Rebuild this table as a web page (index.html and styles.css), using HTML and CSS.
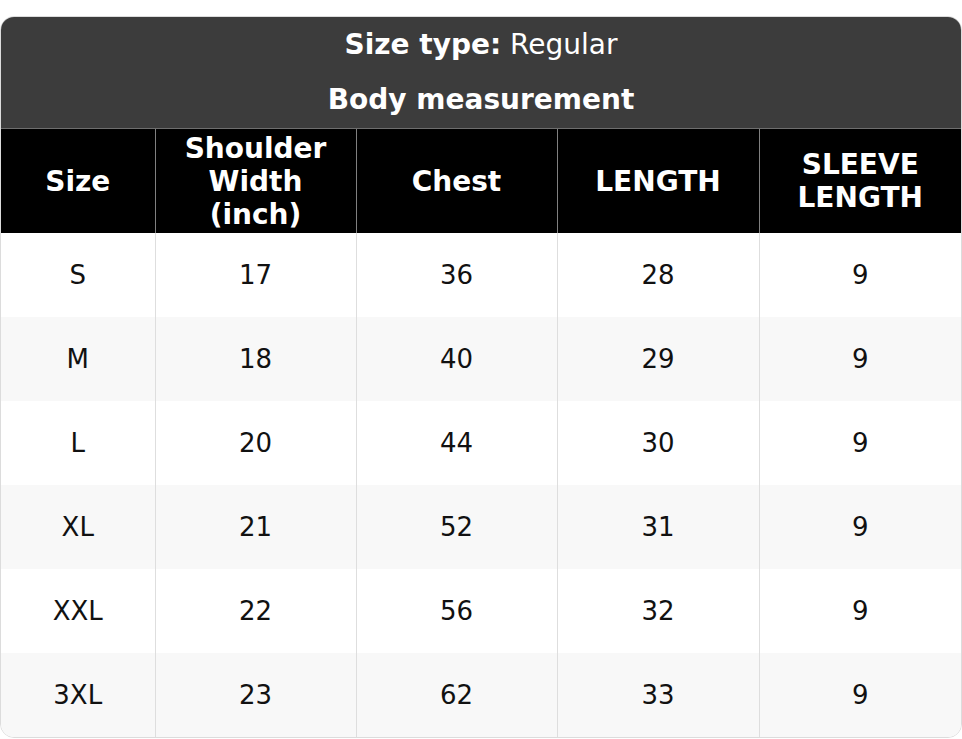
FILE: index.html
```html
<!DOCTYPE html>
<html>
<head>
<meta charset="utf-8">
<link rel="stylesheet" href="styles.css">
</head>
<body>
<div class="chart">
  <table class="size-table">
    <colgroup>
      <col class="c1"><col class="c2"><col class="c3"><col class="c4"><col class="c5">
    </colgroup>
    <thead>
      <tr class="title-row"><th colspan="5"><b>Size type:</b> Regular</th></tr>
      <tr class="title-row"><th colspan="5"><b>Body measurement</b></th></tr>
      <tr class="head-row">
        <th>Size</th>
        <th>Shoulder<br>Width<br>(inch)</th>
        <th>Chest</th>
        <th>LENGTH</th>
        <th>SLEEVE<br>LENGTH</th>
      </tr>
    </thead>
    <tbody>
      <tr><td>S</td><td>17</td><td>36</td><td>28</td><td>9</td></tr>
      <tr><td>M</td><td>18</td><td>40</td><td>29</td><td>9</td></tr>
      <tr><td>L</td><td>20</td><td>44</td><td>30</td><td>9</td></tr>
      <tr><td>XL</td><td>21</td><td>52</td><td>31</td><td>9</td></tr>
      <tr><td>XXL</td><td>22</td><td>56</td><td>32</td><td>9</td></tr>
      <tr><td>3XL</td><td>23</td><td>62</td><td>33</td><td>9</td></tr>
    </tbody>
  </table>
</div>
</body>
</html>
```
FILE: styles.css
```css
html, body {
  margin: 0;
  padding: 0;
  background: #fff;
}
body {
  padding-top: 16px;
  font-family: "DejaVu Sans", sans-serif;
}
.chart {
  width: 962px;
  box-sizing: border-box;
  border: 1px solid #dcdcdc;
  border-radius: 14px;
  overflow: hidden;
}
.size-table {
  width: 100%;
  table-layout: fixed;
  border-collapse: collapse;
  text-align: center;
}
.c1 { width: 154px; }
.c2 { width: 201px; }
.c3 { width: 201px; }
.c4 { width: 202px; }
.c5 { width: auto; }
.title-row th {
  background: #3c3c3c;
  color: #fff;
  font-size: 28px;
  font-weight: normal;
  height: 56px;
  padding: 0;
  line-height: 32px;
}
.title-row b { font-weight: bold; }
.title-row:nth-child(1) th { height: 55px; }
.title-row:nth-child(2) th { border-bottom: 1px solid #6e6e6e; }
.head-row th {
  background: #000;
  color: #fff;
  font-size: 28px;
  font-weight: bold;
  line-height: 33px;
  height: 104px;
  padding: 0 4px;
  border-left: 1px solid #808080;
}
.head-row th:first-child { border-left: none; }
tbody td {
  font-size: 26px;
  color: #111;
  height: 84px;
  padding: 0;
  border-left: 1px solid #dedede;
}
tbody td:first-child { border-left: none; }
tbody tr:nth-child(even) td { background: #f8f8f8; }
```
